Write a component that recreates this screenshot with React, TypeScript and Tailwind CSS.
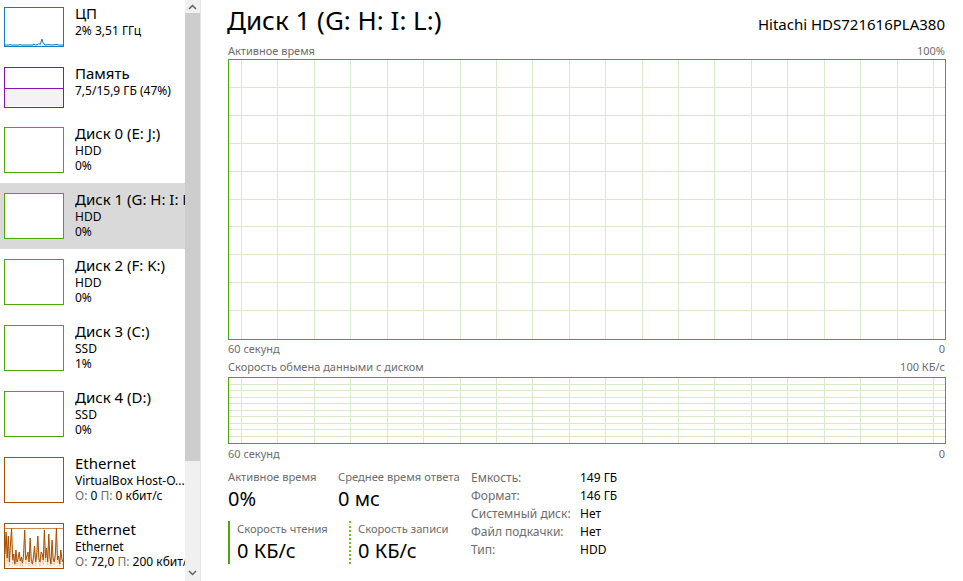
import React from "react";

function GridSvg({ w, h, rows }: { w: number; h: number; rows: number }) {
  const vs: number[] = [];
  for (let k = 0; k < 20; k++) vs.push(Math.round(12 + 36.42 * k) + 0.5);
  const hs: number[] = [];
  for (let k = 1; k < rows; k++) hs.push(Math.round((h / rows) * k) - 0.5);
  return (
    <svg width={w} height={h} className="block" shapeRendering="crispEdges">
      {vs.map((x) => (
        <line key={"v" + x} x1={x} y1={0} x2={x} y2={h} stroke="#d9eacb" strokeWidth={1} />
      ))}
      {hs.map((y) => (
        <line key={"h" + y} x1={0} y1={y} x2={w} y2={y} stroke="#d9eacb" strokeWidth={1} />
      ))}
    </svg>
  );
}

function CpuGraph() {
  const pts = [
    [0, 37], [4, 37], [5, 36.5], [6, 37], [14, 37], [15, 36.5], [16, 37], [28, 37], [29, 36], [30, 37],
    [33, 36.5], [34, 35.5], [35, 36.5], [36, 34], [37, 31], [38, 34.5], [39, 36], [40, 37], [44, 36.5],
    [46, 37], [52, 36.5], [54, 37], [58, 37],
  ];
  const d = pts.map((p, i) => (i ? "L" : "M") + p[0] + " " + p[1]).join(" ");
  return (
    <svg width={58} height={38} className="absolute left-0 top-0">
      <path d={d + " L58 38 L0 38 Z"} fill="#e8f2f9" />
      <path d={d} fill="none" stroke="#117dbb" strokeWidth={1} />
    </svg>
  );
}

function MemGraph() {
  return (
    <svg width={58} height={38} className="absolute left-0 top-0" shapeRendering="crispEdges">
      <rect x={0} y={20} width={58} height={18} fill="#f4f2f4" />
      <line x1={0} y1={20.5} x2={58} y2={20.5} stroke="#8b12ae" strokeWidth={1} />
    </svg>
  );
}

function EthGraph() {
  const ys = [
    30, 8, 34, 12, 38, 20, 4, 36, 30, 40, 26, 38, 34, 28, 37, 33, 39, 30, 6, 36, 32, 28, 38, 14, 36, 40, 33,
    22, 38, 30, 12, 35, 38, 28, 30, 36, 6, 34, 24, 38, 10, 33, 40, 16, 35, 38, 30, 4, 36, 32, 40, 26, 35, 38,
  ];
  const step = 58 / (ys.length - 1);
  const d = ys.map((y, i) => (i ? "L" : "M") + (i * step).toFixed(2) + " " + y).join(" ");
  const ys2 = ys.map((y, i) => Math.min(42, y + 3 + (i % 3)));
  const d2 = ys2.map((y, i) => (i ? "L" : "M") + (i * step).toFixed(2) + " " + y).join(" ");
  return (
    <svg width={58} height={43} className="absolute left-0 top-0">
      <path d={d + " L58 43 L0 43 Z"} fill="#fbf1e8" />
      <line x1={0} y1={4.5} x2={58} y2={4.5} stroke="#c98a52" strokeWidth={1} shapeRendering="crispEdges" />
      <path d={d2} fill="none" stroke="#e3b58c" strokeWidth={0.8} strokeDasharray="1.5 1" />
      <path d={d} fill="none" stroke="#a74f01" strokeWidth={1} />
    </svg>
  );
}

type Item = {
  hClass: string;
  thumbClass: string;
  title: string;
  l1: React.ReactNode;
  l2?: React.ReactNode;
  graph?: React.ReactNode;
  selected?: boolean;
};

const Gray = ({ children }: { children: React.ReactNode }) => <span className="text-[#6d6d6d]">{children}</span>;

const items: Item[] = [
  { hClass: "h-[60px]", thumbClass: "h-[40px] border-[#117dbb]", title: "ЦП", l1: "2% 3,51 ГГц", graph: <CpuGraph /> },
  { hClass: "h-[60px]", thumbClass: "h-[41px] border-[#8b12ae]", title: "Память", l1: "7,5/15,9 ГБ (47%)", graph: <MemGraph /> },
  { hClass: "h-[66px]", thumbClass: "h-[46px] border-[#4da60c]", title: "Диск 0 (E: J:)", l1: "HDD", l2: "0%" },
  { hClass: "h-[66px]", thumbClass: "h-[46px] border-[#4da60c]", title: "Диск 1 (G: H: I: L:)", l1: "HDD", l2: "0%", selected: true },
  { hClass: "h-[66px]", thumbClass: "h-[46px] border-[#4da60c]", title: "Диск 2 (F: K:)", l1: "HDD", l2: "0%" },
  { hClass: "h-[66px]", thumbClass: "h-[46px] border-[#4da60c]", title: "Диск 3 (C:)", l1: "SSD", l2: "1%" },
  { hClass: "h-[66px]", thumbClass: "h-[46px] border-[#4da60c]", title: "Диск 4 (D:)", l1: "SSD", l2: "0%" },
  {
    hClass: "h-[66px]",
    thumbClass: "h-[46px] border-[#a74f01]",
    title: "Ethernet",
    l1: "VirtualBox Host-O...",
    l2: (
      <>
        <Gray>О:</Gray> 0 <Gray>П:</Gray> 0 кбит/с
      </>
    ),
  },
  {
    hClass: "h-[66px]",
    thumbClass: "h-[46px] border-[#a74f01]",
    title: "Ethernet",
    l1: "Ethernet",
    l2: (
      <>
        <Gray>О:</Gray> 72,0 <Gray>П:</Gray> 200 кбит/с
      </>
    ),
    graph: <EthGraph />,
  },
];

function Sidebar() {
  return (
    <div className="w-[185px] shrink-0 overflow-hidden">
      <div className="mt-[-3px] flex flex-col">
        {items.map((it, i) => (
          <div key={i} className={`flex w-[185px] ${it.hClass} ${it.selected ? "bg-[#d9d9d9]" : ""}`}>
            <div className={`relative ml-[4px] mt-[10px] w-[60px] shrink-0 overflow-hidden border bg-white ${it.thumbClass}`}>
              {it.graph}
            </div>
            <div className="ml-[11px] min-w-0 flex-1 overflow-hidden whitespace-nowrap pt-[6px] text-black">
              <div className="text-[15px] leading-[20px]">{it.title}</div>
              <div className="text-[12px] leading-[15px]">{it.l1}</div>
              {it.l2 && <div className="text-[12px] leading-[15px]">{it.l2}</div>}
            </div>
          </div>
        ))}
      </div>
    </div>
  );
}

function Scrollbar() {
  return (
    <div className="flex w-[15px] shrink-0 flex-col bg-[#f0f0f0]">
      <div className="flex h-[13px] items-center justify-center">
        <svg width={9} height={6}>
          <polyline points="1,5 4.5,1.5 8,5" fill="none" stroke="#606060" strokeWidth={1.5} />
        </svg>
      </div>
      <div className="h-[448px] bg-[#cdcdcd]" />
      <div className="flex-1" />
      <div className="flex h-[16px] items-center justify-center">
        <svg width={9} height={6}>
          <polyline points="1,1 4.5,4.5 8,1" fill="none" stroke="#606060" strokeWidth={1.5} />
        </svg>
      </div>
    </div>
  );
}

function Stat({ label, value }: { label: string; value: string }) {
  return (
    <div>
      <div className="text-[11.2px] leading-[16px] text-[#6d6d6d]">{label}</div>
      <div className="mt-[1px] text-[20px] leading-[26px] text-black">{value}</div>
    </div>
  );
}

function Main() {
  const info: [string, string][] = [
    ["Емкость:", "149 ГБ"],
    ["Формат:", "146 ГБ"],
    ["Системный диск:", "Нет"],
    ["Файл подкачки:", "Нет"],
    ["Тип:", "HDD"],
  ];
  return (
    <div className="flex min-w-0 flex-1 flex-col pl-[27px] pr-[18px]">
      <div className="mt-[3px] flex h-[35px] items-baseline justify-between">
        <div className="ml-[-1px] text-[26px] leading-[34px] text-black">Диск 1 (G: H: I: L:)</div>
        <div className="text-[15px] leading-[20px] text-black">Hitachi HDS721616PLA380</div>
      </div>
      <div className="mt-[6px] flex h-[15px] justify-between text-[11px] leading-[14px] text-[#6d6d6d]">
        <span>Активное время</span>
        <span>100%</span>
      </div>
      <div className="h-[281px] w-[718px] border border-[#4da60c] bg-white">
        <GridSvg w={716} h={279} rows={10} />
      </div>
      <div className="mt-[2px] flex h-[14px] justify-between text-[11px] leading-[14px] text-[#6d6d6d]">
        <span>60 секунд</span>
        <span>0</span>
      </div>
      <div className="mt-[4px] flex h-[17px] justify-between text-[11px] leading-[14px] text-[#6d6d6d]">
        <span>Скорость обмена данными с диском</span>
        <span>100 КБ/с</span>
      </div>
      <div className="h-[67px] w-[718px] border border-[#4da60c] bg-white">
        <GridSvg w={716} h={65} rows={10} />
      </div>
      <div className="mt-[3px] flex h-[14px] justify-between text-[11px] leading-[14px] text-[#6d6d6d]">
        <span>60 секунд</span>
        <span>0</span>
      </div>
      <div className="mt-[8px] flex">
        <div className="flex w-[243px] shrink-0 flex-col">
          <div className="flex">
            <div className="w-[110px] shrink-0">
              <Stat label="Активное время" value="0%" />
            </div>
            <Stat label="Среднее время ответа" value="0 мс" />
          </div>
          <div className="mt-[9px] flex">
            <div className="w-[121px] shrink-0 border-l-2 border-[#4da60c] pl-[7px]">
              <Stat label="Скорость чтения" value="0 КБ/с" />
            </div>
            <div className="border-l-2 border-dotted border-[#6cc22a] pl-[7px]">
              <Stat label="Скорость записи" value="0 КБ/с" />
            </div>
          </div>
        </div>
        <div className="flex flex-col text-[12px] leading-[18px]">
          {info.map(([k, v]) => (
            <div key={k} className="flex">
              <span className="w-[109px] shrink-0 text-[#6d6d6d]">{k}</span>
              <span className="text-black">{v}</span>
            </div>
          ))}
        </div>
      </div>
    </div>
  );
}

export default function App() {
  return (
    <div className="flex h-[581px] w-[963px] overflow-hidden bg-white font-['Noto_Sans',sans-serif]">
      <Sidebar />
      <Scrollbar />
      <div className="w-px shrink-0 bg-[#e5e5e5]" />
      <Main />
    </div>
  );
}
